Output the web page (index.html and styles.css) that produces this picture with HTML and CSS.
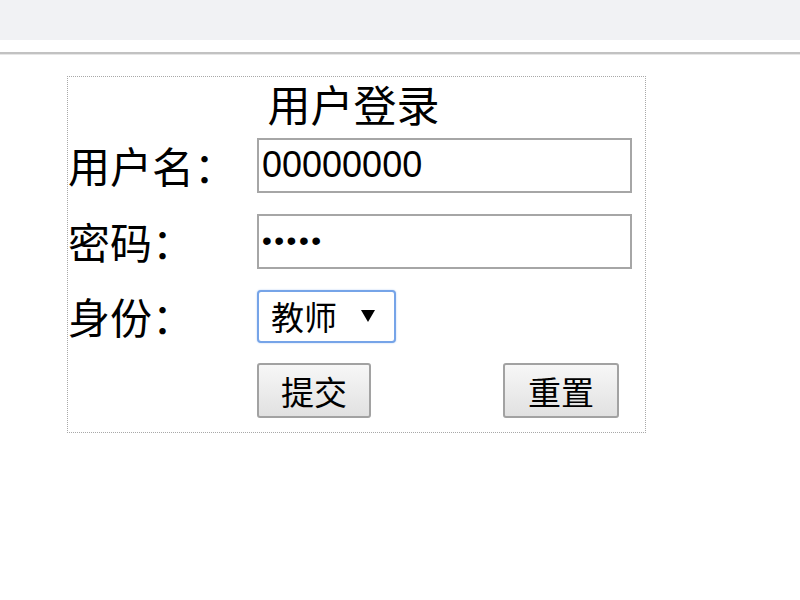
FILE: index.html
```html
<!DOCTYPE html>
<html lang="zh-CN">
<head>
<meta charset="utf-8">
<title>用户登录</title>
<link rel="stylesheet" href="styles.css">
</head>
<body>
<div class="topbar"></div>
<div class="divider"></div>
<form class="login">
  <div class="title">用户登录</div>
  <div class="grid">
    <label class="lbl" for="u">用户名：</label>
    <div class="field"><input id="u" class="text" type="text" value="00000000"></div>
    <label class="lbl" for="p">密码：</label>
    <div class="field"><input id="p" class="text pwd" type="password" value="12345"></div>
    <label class="lbl" for="r">身份：</label>
    <div class="field">
      <span class="select-wrap">
        <select id="r" class="select"><option>教师</option><option>学生</option></select>
        <svg class="arrow" width="16" height="14" viewBox="0 0 16 14"><path d="M1 1 H15 L8 13 Z" fill="#000"/></svg>
      </span>
    </div>
    <div class="lbl"></div>
    <div class="field buttons">
      <button type="submit" class="btn">提交</button>
      <button type="reset" class="btn">重置</button>
    </div>
  </div>
</form>
</body>
</html>
```
FILE: styles.css
```css
html, body {
  margin: 0;
  padding: 0;
  background: #ffffff;
}
body {
  font-family: "Noto Sans CJK SC", "Liberation Sans", sans-serif;
  color: #000;
}
.topbar {
  height: 40px;
  background: #f1f2f4;
}
.divider {
  margin-top: 12px;
  height: 2px;
  background: #c2c2c2;
  border-bottom: 1px solid #e6e6e6;
}
.login {
  margin: 21px 0 0 67px;
  width: 579px;
  height: 357px;
  box-sizing: border-box;
  border: 1px dotted #a8a8a8;
  display: flex;
  flex-direction: column;
}
.title {
  height: 60px;
  text-align: center;
  font-size: 43px;
  line-height: 52px;
  padding-right: 6px;
}
.grid {
  display: grid;
  grid-template-columns: 189px 1fr;
  grid-template-rows: 56px 56px 54px 55px;
  row-gap: 20px;
  align-items: center;
}
.lbl {
  font-size: 42px;
  line-height: 50px;
  white-space: nowrap;
}
.field {
  display: flex;
  align-items: center;
}
.text {
  box-sizing: border-box;
  width: 375px;
  height: 55px;
  margin: 0;
  border: 2px solid #a6a6a6;
  padding: 0 3px;
  font-family: "Liberation Sans", sans-serif;
  font-size: 36px;
  color: #000;
  background: #fff;
  outline: none;
}
.pwd {
  font-size: 28px;
  letter-spacing: 2.5px;
}
.select-wrap {
  box-sizing: border-box;
  width: 139px;
  height: 53px;
  border: 2px solid #76a4e8;
  border-radius: 4px;
  box-shadow: 0 0 2px #b5cff3;
  display: inline-flex;
  align-items: center;
  justify-content: space-between;
  padding: 0 18px 0 12px;
  background: #fff;
}
.select {
  appearance: none;
  -webkit-appearance: none;
  border: none;
  outline: none;
  background: transparent;
  padding: 0;
  margin: 0;
  font-family: "Noto Sans CJK SC", sans-serif;
  font-size: 33px;
  color: #000;
}
.arrow {
  display: block;
}
.buttons {
  justify-content: space-between;
  padding-right: 26px;
}
.btn {
  box-sizing: border-box;
  height: 55px;
  width: 114px;
  margin: 0;
  padding: 0;
  border: 2px solid #a2a2a2;
  border-radius: 3px;
  background: linear-gradient(#f7f7f7, #e1e1e1);
  font-family: "Noto Sans CJK SC", sans-serif;
  font-size: 33px;
  color: #000;
}
.btn + .btn {
  width: 116px;
}
```
